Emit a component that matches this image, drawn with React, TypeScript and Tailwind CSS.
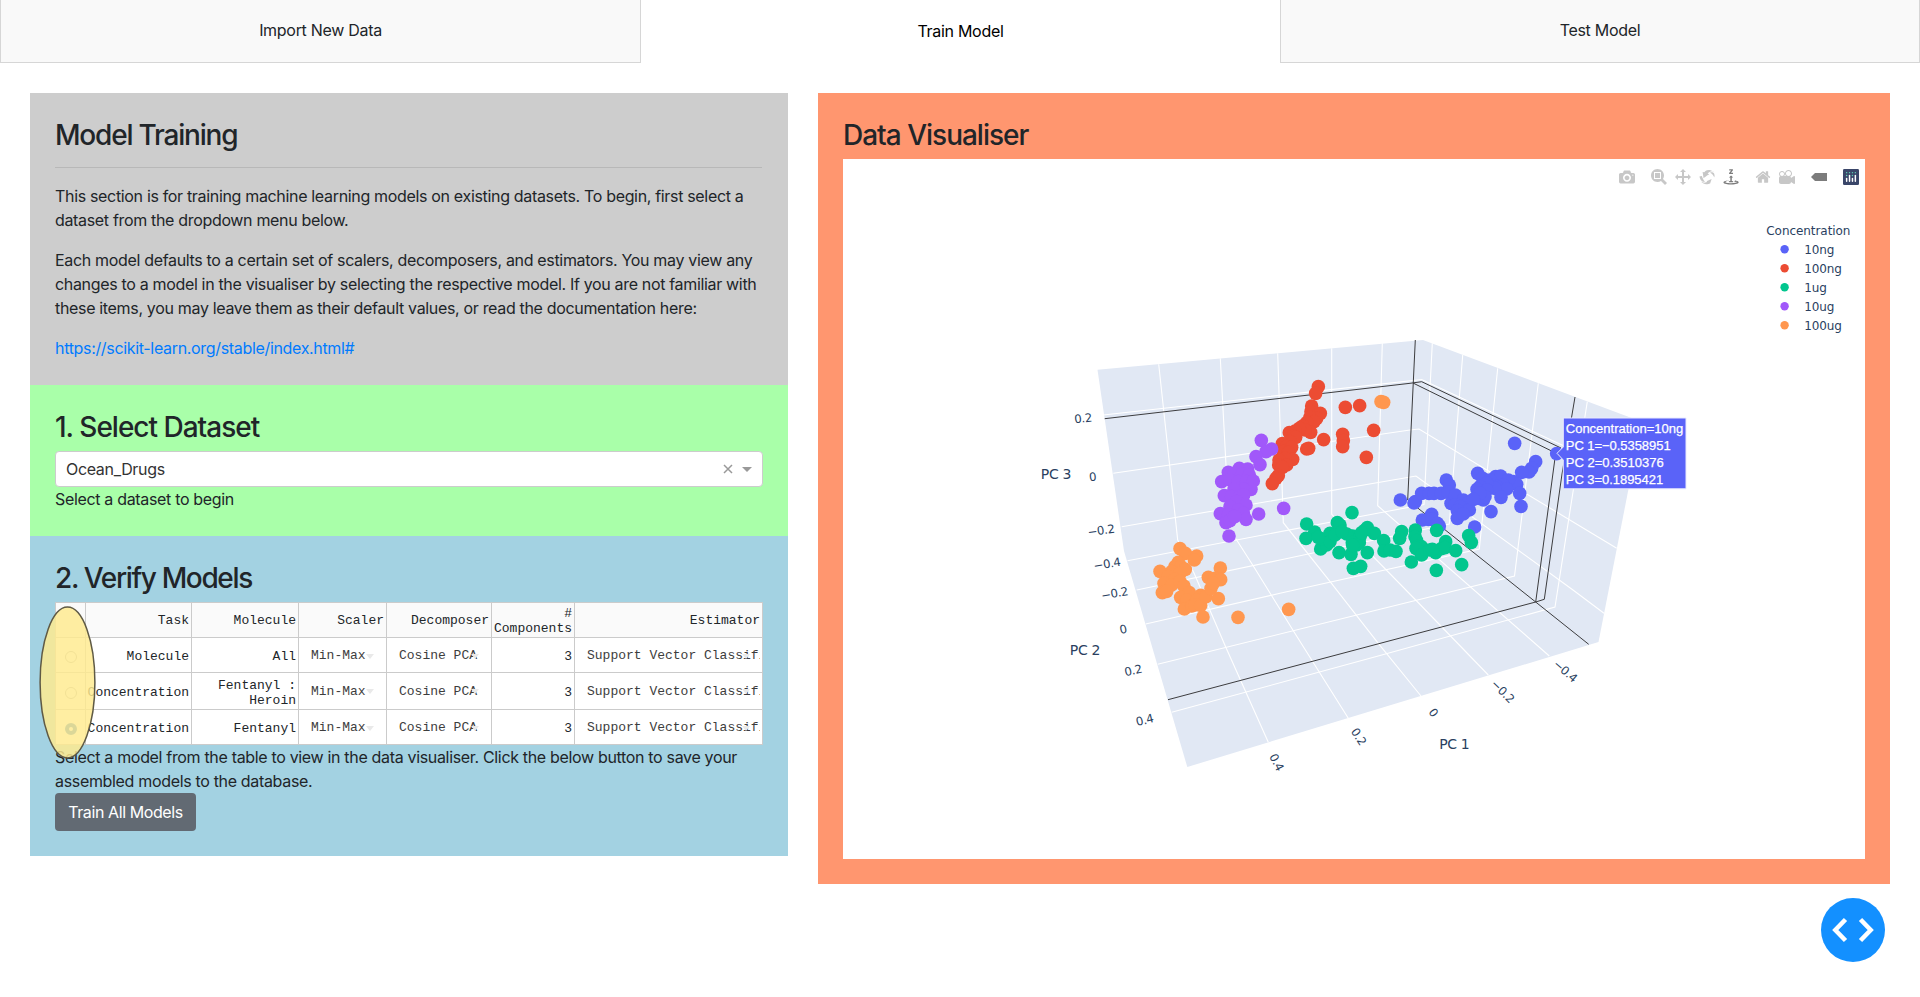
import React from "react";

type Pt = [number, number];
type Cluster = { color: string; x: number; y: number; pts: Pt[] };

const BLUE = "#5a63f8";
const RED = "#ec4c33";
const GREEN = "#02c68e";
const PURPLE = "#a158fa";
const ORANGE = "#ff974f";

/* Each cluster has an origin in plot space; its points are in thirds of a pixel. */
const CLUSTERS: Cluster[] = [
  {
    color: RED, x: 1030, y: 330,
    pts: [[865,170],[857,190],[845,228],[843,245],[871,250],[860,265],[840,262],[852,275],[830,278],[818,288],[842,307],[825,300],[808,295],[795,303],[778,308],[790,318],[797,322],[780,335],[757,341],[770,350],[785,352],[760,365],[775,368],[788,388],[765,385],[747,390],[770,405],[746,405],[757,412],[745,437],[738,445],[727,461],[830,357],[836,355],[881,329],[938,313],[940,332],[938,350],[946,232],[989,227],[1031,301],[1009,382]],
  },
  { color: ORANGE, x: 1030, y: 330, pts: [[1053,215],[1061,217]] },
  {
    color: PURPLE, x: 1030, y: 330,
    pts: [[694,331],[725,357],[708,365],[678,380],[690,404],[628,415],[653,417],[595,427],[612,430],[637,432],[658,435],[575,455],[600,450],[625,455],[650,455],[670,453],[663,478],[640,478],[612,478],[583,497],[605,500],[630,500],[641,495],[620,515],[600,530],[648,525],[625,540],[571,551],[595,555],[610,560],[640,550],[648,568],[588,578],[600,572],[686,552],[761,535],[597,618],[614,560]],
  },
  {
    color: ORANGE, x: 1080, y: 500,
    pts: [[300,146],[316,160],[350,168],[343,180],[240,214],[295,187],[285,200],[303,200],[316,208],[275,215],[300,220],[265,230],[285,238],[252,250],[275,255],[300,245],[247,278],[260,274],[312,258],[328,278],[302,292],[320,300],[313,327],[335,318],[362,286],[350,300],[345,315],[362,316],[378,290],[393,265],[415,296],[421,204],[385,232],[405,235],[422,239],[369,351],[474,352],[626,328],[400,250]],
  },
  {
    color: BLUE, x: 1380, y: 330,
    pts: [[404,340],[467,395],[455,415],[447,426],[425,427],[293,430],[308,445],[347,440],[362,438],[330,450],[400,455],[410,463],[385,450],[370,465],[350,470],[380,477],[345,475],[320,460],[300,470],[291,478],[320,480],[419,490],[423,529],[363,502],[333,545],[284,591],[199,450],[208,465],[61,510],[106,515],[102,519],[125,490],[147,490],[162,490],[183,490],[205,487],[213,520],[235,510],[226,495],[225,525],[250,510],[262,520],[240,530],[268,540],[232,542],[232,565],[250,552],[310,510],[298,505],[315,500],[300,490],[280,508],[155,553],[127,570],[145,568],[156,568],[178,588],[172,580],[530,371]],
  },
  {
    color: GREEN, x: 1280, y: 480,
    pts: [[80,132],[104,156],[78,175],[122,207],[140,195],[127,177],[150,160],[172,128],[180,135],[150,185],[165,165],[177,218],[213,223],[216,98],[220,265],[242,259],[262,218],[218,168],[200,162],[186,155],[240,170],[238,188],[217,188],[230,195],[218,196],[255,150],[262,143],[245,158],[283,160],[311,182],[312,213],[330,210],[348,214],[365,155],[359,175],[406,150],[405,170],[410,182],[412,200],[424,200],[420,215],[408,205],[425,225],[394,246],[449,210],[467,218],[470,151],[469,271],[484,206],[497,185],[495,203],[527,212],[566,167],[574,187],[545,254],[115,172],[457,208]],
  },
];

const GRID = [
  "1158.7,364.3 1177.7,540 1194,573 1225.7,647 1268.3,742.3",
  "1220.3,358.3 1229.5,531 1236.7,540 1253.3,566 1293.3,630.7 1348.3,718.3",
  "1277.7,353.3 1283.3,522.7 1330.7,582.3 1378.3,643.3 1421,696",
  "1331.7,348.3 1331.7,514.3 1415.7,600 1488.3,675",
  "1382.3,343.3 1377.7,505.7 1549.3,656",
  "1103.3,415 1421.7,379.5 1563,445.5",
  "1113.3,473.3 1410,430 1419,429 1616.7,548.3",
  "1121.7,526.7 1416,476 1573,590 1604,613.3",
  "1127.5,560.7 1380,512.7 1424,504.5 1432.3,343.3",
  "1136.7,590 1280,560 1449.3,524 1462.7,355",
  "1145.7,624 1280,593.3 1479.3,549 1497.7,368.3",
  "1157.7,664.3 1380,609.3 1514.5,576 1538.3,383.3",
  "1171.7,712.3 1380,655.5 1555,607 1573.3,490 1587.3,401.7",
];

const AXES = [
  "1415.3,340 1407.7,500 1588.7,644.3",
  "1104.7,418.7 1410,383.3 1421.7,381.7 1561,448",
  "1413,383 1555.7,453 1535.7,602",
  "1575,397 1562,474 1544.3,599.3 1535.7,602 1168,699.7",
];

const TICKS: { t: string; x: number; y: number; r: number }[] = [
  { t: "0.2", x: 1083, y: 418, r: -6 },
  { t: "0", x: 1092.5, y: 476.5, r: -6 },
  { t: "−0.2", x: 1101, y: 530, r: -8 },
  { t: "−0.4", x: 1107, y: 563.5, r: -9 },
  { t: "−0.2", x: 1114.5, y: 593, r: -10 },
  { t: "0", x: 1123, y: 629, r: -12 },
  { t: "0.2", x: 1133, y: 670, r: -13 },
  { t: "0.4", x: 1144.5, y: 719.7, r: -14 },
  { t: "0.4", x: 1277, y: 762, r: 63 },
  { t: "0.2", x: 1359, y: 736.5, r: 58 },
  { t: "0", x: 1433.7, y: 712.3, r: 52 },
  { t: "−0.2", x: 1503, y: 691, r: 45 },
  { t: "−0.4", x: 1565.5, y: 670.7, r: 41 },
];

const LEGEND: [string, string, number][] = [
  ["10ng", BLUE, 29.8],
  ["100ng", RED, 37.3],
  ["1ug", GREEN, 22.3],
  ["10ug", PURPLE, 29.8],
  ["100ug", ORANGE, 37.3],
];

const FONT = "'DejaVu Sans', Verdana, sans-serif";
const INK = "#2a3f5f";

const TIP = ["Concentration=10ng", "PC 1=−0.5358951", "PC 2=0.3510376", "PC 3=0.1895421"];
const TIP_W = [117, 104.5, 97.5, 97];

function Plot() {
  return (
    <svg viewBox="843 159 1022 700" className="block h-[700px] w-[1022px]">
      <polygon
        points="1097.5,369.7 1423,340 1641,421.5 1628.3,490 1598.5,642 1187.3,767 1124,551"
        fill="#e1e8f4"
      />
      <g fill="none" stroke="#fff" strokeWidth="1.1">
        {GRID.map((p) => <polyline key={p} points={p} />)}
      </g>
      <g fill="none" stroke="#3c3c3e" strokeWidth="1">
        {AXES.map((p) => <polyline key={p} points={p} />)}
      </g>
      {CLUSTERS.map((c, i) => (
        <g key={i} fill={c.color}>
          {c.pts.map(([x, y], j) => (
            <circle key={j} cx={c.x + x / 3} cy={c.y + y / 3} r="6.8" />
          ))}
        </g>
      ))}
      <g fontFamily={FONT} fill={INK} fontSize="12" textAnchor="middle">
        {TICKS.map((k, i) => (
          <text key={i} transform={`translate(${k.x} ${k.y}) rotate(${k.r})`} y="4.4" fontSize="11.7">
            {k.t}
          </text>
        ))}
        <text x="1056" y="479.2" fontSize="14">PC 3</text>
        <text x="1085" y="655" fontSize="14">PC 2</text>
        <text x="1454.3" y="749" fontSize="14">PC 1</text>
      </g>
      <path
        d="M1557 453.3L1563.3 447V418H1686V488.8H1563.3V460Z"
        fill={BLUE}
        stroke="#e9eafe"
        strokeWidth="1"
      />
      <g fontFamily="'Liberation Sans', Arial, sans-serif" fontSize="13" fill="#fff" stroke="#fff" strokeWidth="0.25">
        {TIP.map((t, i) => (
          <text key={t} x="1565.8" y={432.8 + i * 16.9} textLength={TIP_W[i]}>{t}</text>
        ))}
      </g>
      <g fontFamily={FONT} fontSize="12" fill={INK}>
        <text x="1766.3" y="234.8" textLength="83.8">Concentration</text>
        {LEGEND.map(([t, c, w], i) => (
          <g key={t}>
            <circle cx="1784.6" cy={249.2 + i * 19} r="4.2" fill={c} />
            <text x="1804.2" y={254 + i * 19} textLength={w}>{t}</text>
          </g>
        ))}
      </g>
    </svg>
  );
}

const ICONS = {
  camera: "m500 450c-83 0-150-67-150-150 0-83 67-150 150-150 83 0 150 67 150 150 0 83-67 150-150 150z m400 150h-120c-16 0-34 13-39 29l-31 93c-6 15-23 28-40 28h-340c-16 0-34-13-39-28l-31-94c-6-15-23-28-40-28h-120c-55 0-100-45-100-100v-450c0-55 45-100 100-100h800c55 0 100 45 100 100v450c0 55-45 100-100 100z m-400-550c-138 0-250 112-250 250 0 138 112 250 250 250 138 0 250-112 250-250 0-138-112-250-250-250z m365 380c-19 0-35 16-35 35 0 19 16 35 35 35 19 0 35-16 35-35 0-19-16-35-35-35z",
  zoom: "m1000-25l-250 251c40 63 63 138 63 218 0 224-182 406-407 406-224 0-406-182-406-406s183-406 407-406c80 0 155 22 218 62l250-250 125 125z m-812 250l0 438 437 0 0-438-437 0z m62 375l313 0 0-312-313 0 0 312z",
  pan: "m1000 350l-187 188 0-125-250 0 0 250 125 0-188 187-187-187 125 0 0-250-250 0 0 125-188-188 186-187 0 125 252 0 0-250-125 0 187-188 188 188-125 0 0 250 250 0 0-126 187 188z",
  rotate: "m922 660c-5 4-9 7-14 11-359 263-580-31-580-31l-102 28 58-400c0 1 1 1 2 2 118 108 351 249 351 249s-62 27-100 42c88 83 222 183 347 122 16-8 30-17 44-27-2 1-4 2-6 4z m36-329c0 0 64 229-88 296-62 27-124 14-175-11 157-78 225-208 249-266 8-19 11-31 11-31 2 5 6 15 11 32-5-13-8-20-8-20z m-775-239c70-31 117-50 198-32-121 80-199 346-199 346l-96-15-58-12c0 0 55-226 155-287z m603 133l-317-139c0 0 4-4 19-14 7-5 24-15 24-15s-177-147-389 4c235-287 536-112 536-112l31-22 100 299-4-1z",
  turntable: "m833 5l-17 108v41l-130-65 130-66c0 0 0 38 0 39 0-1 36-14 39-25 4-15-6-22-16-30-15-12-39-16-56-20-90-22-187-23-279-23-261 0-341 34-353 59 3 60 228 110 228 110-140-8-351-35-351-116 0-120 293-142 474-142 155 0 477 22 477 142 0 50-74 79-163 96z m-374 94c-58-5-99-21-99-40 0-24 65-43 144-43 79 0 143 19 143 43 0 19-42 34-98 40v216h87l-132 135-133-135h88v-216z m167 515h-136v1c16 16 31 34 46 52l84 109v54h-230v-71h124v-1c-16-17-28-32-44-51l-89-114v-51h245v72z",
  home: "m786 296v-267q0-15-11-26t-25-10h-214v214h-143v-214h-214q-15 0-25 10t-11 26v267q0 1 0 2t0 2l321 264 321-264q1-1 1-4z m124 39l-34-41q-5-5-12-6h-2q-7 0-12 3l-386 322-386-322q-7-4-13-4-7 2-12 7l-35 41q-4 5-3 13t6 12l401 334q18 15 42 15t43-15l136-114v109q0 8 5 13t13 5h107q8 0 13-5t5-13v-227l122-102q5-5 6-12t-4-13z",
  movie: "m938 413l-188-125c0 37-17 71-44 94 64 38 107 107 107 187 0 121-98 219-219 219-121 0-219-98-219-219 0-61 25-117 66-156h-115c30 33 49 76 49 125 0 103-84 187-187 187s-188-84-188-187c0-57 26-107 65-141-38-22-65-62-65-109v-250c0-70 56-126 125-126h500c69 0 125 56 125 126l188-126c34 0 62 28 62 63v375c0 35-28 63-62 63z m-750 0c-69 0-125 56-125 125s56 125 125 125 125-56 125-125-56-125-125-125z m406-1c-87 0-157 70-157 157 0 86 70 156 157 156s156-70 156-156-70-157-156-157z",
  tag: "m375 725l0 0-375-375 375-374 0-1 1125 0 0 750-1125 0z",
};

function Icon({ d, w = 1000, active = false }: { d: string; w?: number; active?: boolean }) {
  return (
    <svg viewBox={`0 0 ${w} 1000`} className="block size-4">
      <path d={d} transform="matrix(1 0 0 -1 0 850)" fill={active ? "#7c7c7c" : "#c7c7c7"} />
    </svg>
  );
}

function ModeBar() {
  return (
    <div className="absolute right-[6px] top-[10px] flex gap-4">
      <Icon d={ICONS.camera} />
      <div className="flex gap-2">
        <Icon d={ICONS.zoom} />
        <Icon d={ICONS.pan} />
        <Icon d={ICONS.rotate} />
        <Icon d={ICONS.turntable} active />
      </div>
      <div className="flex gap-2">
        <Icon d={ICONS.home} w={928.6} />
        <Icon d={ICONS.movie} />
      </div>
      <Icon d={ICONS.tag} w={1500} active />
      <svg viewBox="0 0 132 132" className="block size-4">
        <rect width="132" height="132" rx="10" fill="#3a4669" />
        <g fill="#5fd0b4">
          <circle cx="30" cy="30" r="6" /><circle cx="54" cy="30" r="6" />
          <circle cx="78" cy="30" r="6" /><circle cx="102" cy="30" r="6" />
          <circle cx="30" cy="54" r="6" /><circle cx="78" cy="54" r="6" />
        </g>
        <g fill="#fff">
          <rect x="24" y="72" width="12" height="36" rx="6" />
          <rect x="48" y="48" width="12" height="60" rx="6" />
          <rect x="72" y="72" width="12" height="36" rx="6" />
          <rect x="96" y="48" width="12" height="60" rx="6" />
        </g>
      </svg>
    </div>
  );
}

function Caret() {
  return (
    <span className="absolute right-[12px] top-[16px] h-0 w-0 border-x-[4px] border-t-[5px] border-x-transparent border-t-[#e9e9e9]" />
  );
}

const HEADERS = ["", "Task", "Molecule", "Scaler", "Decomposer", "# Components", "Estimator"];
const ROWS = [
  { task: "Molecule", molecule: "All", on: false },
  { task: "Concentration", molecule: "Fentanyl : Heroin", on: false },
  { task: "Concentration", molecule: "Fentanyl", on: true },
];

const CELL = "relative flex items-center justify-end overflow-hidden border-b border-r border-[#cbcbcb] bg-white pr-[2px] text-right";
const DROP = "relative flex items-center overflow-hidden border-b border-r border-[#cbcbcb] bg-white pl-[12px] pb-[2px] text-[#3d3d3d] whitespace-nowrap";

function ModelTable() {
  return (
    <div className="relative">
      <div className="grid grid-cols-[30px_106px_107px_88px_105px_83px_188px] grid-rows-[35px_35px_37px_35px] border-l border-t border-[#cbcbcb] font-['Liberation_Mono','Courier_New',monospace] text-[13px] leading-[15.5px] tracking-normal text-[#212529]">
        {HEADERS.map((h) => (
          <div
            key={h}
            className="flex items-center justify-end border-b border-r border-[#cbcbcb] bg-[#fafafa] pr-[2px] pt-[2px] text-right"
          >
            {h}
          </div>
        ))}
        {ROWS.map((r, i) => (
          <React.Fragment key={i}>
            <div className="flex items-center justify-center border-b border-r border-[#cbcbcb] bg-white pt-1">
              {r.on ? (
                <span className="size-3 rounded-full border-[4px] border-[#2b79c4] bg-white" />
              ) : (
                <span className="size-3 rounded-full border border-[#b0b0b0] bg-white" />
              )}
            </div>
            <div className={CELL + " pt-[4px]"}>{r.task}</div>
            <div className={CELL + " pl-[20px] pt-[4px]"}>{r.molecule}</div>
            <div className={DROP + " pt-[4px]"}>Min-Max<Caret /></div>
            <div className={DROP + " pt-[4px]"}>Cosine PCA<Caret /></div>
            <div className={CELL + " pt-[4px]"}>3</div>
            <div className={DROP + " pt-[4px]"}>
              <span className="w-[173px] overflow-hidden">Support Vector Classifier</span>
              <Caret />
            </div>
          </React.Fragment>
        ))}
      </div>
      <svg viewBox="0 0 57 153" className="absolute left-[-15.8px] top-[4px] h-[153px] w-[57px]">
        <ellipse cx="28.5" cy="76.5" rx="27.4" ry="75.4" fill="#ffeb8f" fillOpacity=".83" stroke="#5f5a45" strokeWidth="1.5" />
      </svg>
    </div>
  );
}

const H = "h-[33px] whitespace-nowrap text-[28px] font-medium leading-[35.5px]";

export default function App() {
  return (
    <div className="min-h-[997px] bg-white font-['Inter',sans-serif] text-[16px] leading-6 tracking-[-0.33px] text-[#212529]">
      <nav className="flex h-[63px] text-center tracking-[-0.3px]">
        <div className="w-[641px] border-x border-b border-[#d6d6d6] bg-[#f9f9f9] pt-[18px]">Import New Data</div>
        <div className="w-[639px] bg-white pt-[19px] text-black">Train Model</div>
        <div className="w-[640px] border-x border-b border-[#d6d6d6] bg-[#f9f9f9] pt-[18px]">Test Model</div>
      </nav>
      <main className="flex items-start gap-[30px] px-[30px] pt-[30px]">
        <div className="w-[758px]">
          <section className="h-[292px] bg-[#cdcdcd] py-[25px] pl-[25px] pr-[26px]">
            <h3 className={H + " tracking-[-1.2px]"}>Model Training</h3>
            <hr className="mb-[15.5px] mt-4 border-t border-[#b8b8b8]" />
            <p className="mb-4 whitespace-nowrap">
              This section is for training machine learning models on existing datasets. To begin, first select a
              <br />
              dataset from the dropdown menu below.
            </p>
            <p className="mb-4 whitespace-nowrap">
              Each model defaults to a certain set of scalers, decomposers, and estimators. You may view any
              <br />
              changes to a model in the visualiser by selecting the respective model. If you are not familiar with
              <br />
              these items, you may leave them as their default values, or read the documentation here:
            </p>
            <a href="#" className="text-[#007bff]">https://scikit-learn.org/stable/index.html#</a>
          </section>
          <section className="h-[151px] bg-[#a9ffa9] p-[25px]">
            <h3 className={H + " mb-2 tracking-[-1px]"}>1. Select Dataset</h3>
            <div className="flex h-9 items-center rounded-[4px] border border-[#ccc] bg-white pl-[10px] pr-[10px] text-[#333]">
              <span className="grow">Ocean_Drugs</span>
              <svg viewBox="0 0 10 10" className="mr-[9px] size-[10px]">
                <path d="M1 1L9 9M9 1L1 9" stroke="#999" strokeWidth="1.5" />
              </svg>
              <span className="border-x-[5px] border-t-[5px] border-x-transparent border-t-[#999]" />
            </div>
            <p>Select a dataset to begin</p>
          </section>
          <section className="h-[320px] bg-[#a3d2e2] p-[25px]">
            <h3 className={H + " mb-2 tracking-[-1.35px]"}>2. Verify Models</h3>
            <ModelTable />
            <p className="whitespace-nowrap">
              Select a model from the table to view in the data visualiser. Click the below button to save your
              <br />
              assembled models to the database.
            </p>
            <button className="block h-[38px] w-[141px] rounded-[4px] bg-[#626a73] tracking-[-0.4px] text-white">Train All Models</button>
          </section>
        </div>
        <section className="h-[791px] w-[1072px] bg-[#ff966f] p-[25px]">
          <h3 className={H + " mb-2 tracking-[-1px]"}>Data Visualiser</h3>
          <div className="relative h-[700px] bg-white">
            <Plot />
            <ModeBar />
          </div>
        </section>
      </main>
      <button className="absolute left-[1821px] top-[898px] size-16 rounded-full bg-[#1390ff]">
        <svg viewBox="0 0 64 64" className="size-16">
          <path d="M24.5 21.5L14.3 32L24.5 42.5M39.5 21.5L49.7 32L39.5 42.5" fill="none" stroke="#fff" strokeWidth="4.5" />
        </svg>
      </button>
    </div>
  );
}
